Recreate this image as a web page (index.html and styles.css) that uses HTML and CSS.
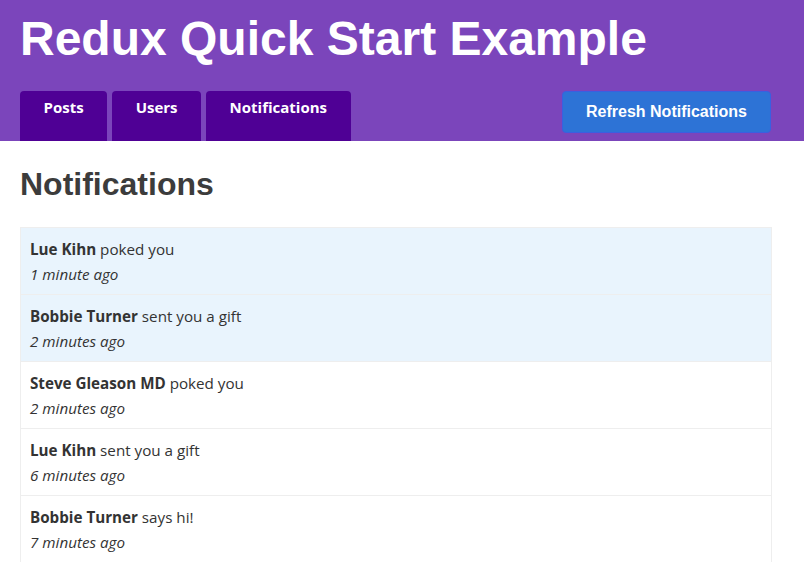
FILE: index.html
```html
<!DOCTYPE html>
<html>
<head>
<meta charset="utf-8">
<link rel="stylesheet" href="styles.css">
</head>
<body>
<nav class="header">
  <h1 class="title">Redux Quick Start Example</h1>
  <div class="nav-row">
    <div class="nav-links">
      <a class="nav-link" href="#">Posts</a>
      <a class="nav-link" href="#">Users</a>
      <a class="nav-link" href="#">Notifications</a>
    </div>
    <button class="refresh">Refresh Notifications</button>
  </div>
</nav>
<main class="content">
  <h2 class="page-title">Notifications</h2>
  <div class="list">
    <div class="item new">
      <div class="msg"><b>Lue Kihn</b> poked you</div>
      <div class="time">1 minute ago</div>
    </div>
    <div class="item new">
      <div class="msg"><b>Bobbie Turner</b> sent you a gift</div>
      <div class="time">2 minutes ago</div>
    </div>
    <div class="item">
      <div class="msg"><b>Steve Gleason MD</b> poked you</div>
      <div class="time">2 minutes ago</div>
    </div>
    <div class="item">
      <div class="msg"><b>Lue Kihn</b> sent you a gift</div>
      <div class="time">6 minutes ago</div>
    </div>
    <div class="item">
      <div class="msg"><b>Bobbie Turner</b> says hi!</div>
      <div class="time">7 minutes ago</div>
    </div>
  </div>
</main>
</body>
</html>
```

FILE: styles.css
```css
* { box-sizing: border-box; }
html, body { margin: 0; padding: 0; }
body {
  font-family: "Open Sans", "Noto Sans", sans-serif;
  color: #333;
  background: #fff;
  overflow: hidden;
}
.header {
  background: #7b45bb;
  padding: 11px 20px 0 20px;
  height: 141px;
  display: flex;
  flex-direction: column;
}
.title {
  margin: 0;
  font-family: "Liberation Sans", Arial, sans-serif;
  font-weight: bold;
  font-size: 48px;
  line-height: 56px;
  color: #fff;
}
.nav-row {
  margin-top: 24px;
  display: flex;
  justify-content: space-between;
  align-items: flex-start;
  flex: 1;
}
.nav-links {
  display: flex;
  gap: 5px;
  align-self: stretch;
}
.nav-link {
  display: block;
  background: #4f0095;
  color: #fff;
  text-decoration: none;
  font-weight: bold;
  font-size: 15px;
  line-height: 20px;
  padding: 6px 23.5px 0 23.5px;
  border-radius: 4px 4px 0 0;
}
.refresh {
  margin-right: 13px;
  background: #2d73d6;
  color: #fff;
  border: 1px solid #3a5fe0;
  border-radius: 4px;
  font-family: "Liberation Sans", Arial, sans-serif;
  font-weight: bold;
  font-size: 16px;
  width: 209px;
  height: 42px;
  padding: 0;
}
.content {
  padding: 0 32px 0 20px;
}
.page-title {
  margin: 26px 0 26px 0;
  font-family: "Liberation Sans", Arial, sans-serif;
  font-weight: bold;
  font-size: 32px;
  line-height: 34px;
  color: #3c3c3c;
}
.list {
  border-left: 1px solid #eee;
  border-right: 1px solid #eee;
}
.item {
  border-top: 1px solid #eee;
  padding: 9px 9px 7px 9px;
  height: 67px;
}
.item.new { background: #e9f4fd; }
.msg, .time {
  font-size: 15.2px;
  line-height: 25px;
}
.msg b { font-weight: bold; }
.time { font-style: italic; }
```
